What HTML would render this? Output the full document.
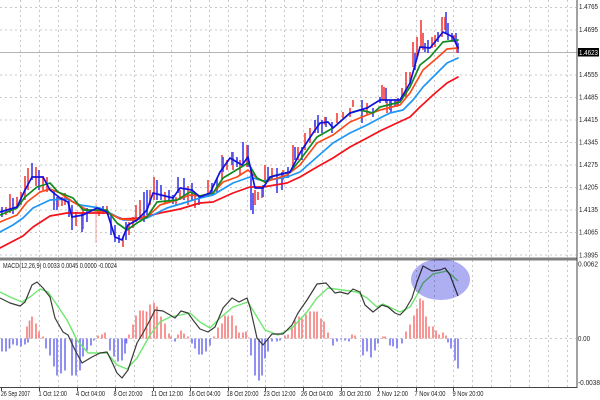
<!DOCTYPE html>
<html><head><meta charset="utf-8"><style>
html,body{margin:0;padding:0;background:#fff;width:600px;height:400px;overflow:hidden}
svg{display:block;filter:blur(.3px)}
text{font-family:"Liberation Sans",sans-serif;fill:#222}
.p{font-size:7.5px}.d{font-size:7px}
</style></head><body>
<svg width="600" height="400" viewBox="0 0 600 400" xmlns="http://www.w3.org/2000/svg">
<rect width="600" height="400" fill="#fff"/>
<g stroke="#c8c8c8" stroke-width="1" stroke-dasharray="2 3" fill="none">
<path d="M20.5 0V387M39.5 0V387M58.5 0V387M77.5 0V387M96.5 0V387M115.5 0V387M134.5 0V387M153.5 0V387M171.5 0V387M190.5 0V387M209.5 0V387M228.5 0V387M247.5 0V387M265.5 0V387M284.5 0V387M303.5 0V387M322.5 0V387M341.5 0V387M360.5 0V387M378.5 0V387M397.5 0V387M416.5 0V387M434.5 0V387M453.5 0V387M472.5 0V387M491.5 0V387M510.5 0V387M529.5 0V387M548.5 0V387M567.5 0V387"/>
<path d="M0 7.5H576M0 30H576M0 75H576M0 97.5H576M0 120H576M0 142.5H576M0 165H576M0 187.5H576M0 210H576M0 232.5H576M0 255H576M0 338.5H576"/>
</g>
<path d="M0 52.5H577" stroke="#b4b4b4" stroke-width="1"/>
<rect x="0" y="257.500" width="577" height="3" fill="#808080"/>
<path d="M577 0V387.5H0" stroke="#444" stroke-width="1" fill="none"/>

<!-- candles -->
<path fill="none" stroke="#f45252" stroke-width="1.8" d="M6 207V215M10 194V213M17 197V208M21 192V205M25 176V200M28 168V190M36 167V186M43 176V190M47 177V192M58 197V207M62 197V206M65 193V205M76 212V226M83 210V229M99 208V216M107 206V214M123 237V247M129 222V235M133 217V228M136 205V222M140 200V218M150 190V205M154 177V200M165 192V204M176 197V206M180 190V200M188 186V205M195 195V208M208 180V197M222 155V180M227 160V170M233 152V170M240 160V175M247 145V167M255 190V205M258 192V200M262 187V198M265 165V183M272 168V180M283 170V180M293 145V168M298 147V160M305 133V150M310 128V143M315 120V133M325 117V125M337 113V123M343 112V118M350 108V117M353 100V107M367 103V115M382 85V100M384 87V100M387 100V113M397 100V107M402 88V100M406 72V97M410 72V83M413 42V67M417 37V57M421 20V47M423 33V50M432 37V48M435 35V47M442 17V37M445 17V30M454 35V42M457 40V53"/>
<path fill="none" stroke="#f9a0a0" stroke-width="1" d="M96 203V243"/>
<path fill="none" stroke="#5252ee" stroke-width="1.8" d="M2 207V217M13 198V214M32 163V180M39 170V190M54 190V210M57 197V210M69 199V217M72 205V230M82 213V232M87 208V222M103 206V214M111 213V235M115 225V242M119 235V243M126 222V240M144 192V222M147 190V215M157 180V200M161 185V200M169 190V202M173 195V204M178 177V193M184 178V200M192 183V200M199 195V205M212 183V195M217 178V192M223 157V172M232 152V165M237 157V167M243 142V163M248 145V167M251 167V210M253 193V214M263 185V197M268 167V182M277 168V193M282 172V190M288 167V178M295 147V160M302 147V160M315 120V127M318 115V133M322 120V133M326 117V127M332 122V133M362 100V123M373 108V117M380 97V103M386 88V103M390 100V110M391 100V112M395 100V107M398 98V105M415 53V70M425 43V52M428 40V53M438 32V42M446 12V33M448 23V40M452 33V42M456 33V43M458 43V53"/>

<!-- moving averages -->
<g fill="none" stroke-width="1.7" stroke-linejoin="round" stroke-linecap="round">
<polyline stroke="#f5101a" points="0,248 23,236 33,227 50,216 67,213 93,213 107,213 123,219 140,218 160,213 180,209 200,203 213,202 233,193 250,187 263,187 287,183 300,177 317,167 333,158 350,147 367,138 380,131 397,123 410,117 420,107 433,95 447,83 458,77"/>
<polyline stroke="#1f96f5" points="0,232 13,225 23,218 33,208 50,200 67,199 80,205 100,208 110,213 123,220 133,220 147,218 167,208 187,202 200,198 213,195 233,183 250,177 263,181 287,177 300,172 317,157 333,143 350,133 367,125 380,118 390,113 403,110 413,100 423,87 437,73 447,63 458,58"/>
<polyline stroke="#fa4a1c" points="0,222 17,215 27,202 40,192 50,189 60,193 73,202 87,210 107,212 120,219 133,220 147,217 160,205 177,200 190,195 200,196 213,193 223,182 237,177 248,170 257,178 265,182 287,175 300,165 317,143 333,135 350,122 367,115 380,110 400,105 410,93 423,70 437,58 447,49 458,48"/>
<polyline stroke="#0f8a1e" points="0,215 17,208 25,197 37,187 50,183 58,192 73,198 83,210 107,210 117,223 127,230 137,223 147,217 157,202 177,200 190,192 200,196 213,193 223,178 233,172 248,163 257,178 265,182 273,176 290,172 300,160 317,137 333,128 350,113 360,110 373,113 380,107 400,102 410,87 420,65 430,57 443,42 458,40"/>
<polyline stroke="#1212dc" points="0,212 17,207 25,190 32,177 43,177 50,190 60,198 68,202 72,217 83,215 97,208 107,212 115,237 122,240 128,225 137,220 147,210 153,193 173,198 180,188 192,190 200,197 210,193 220,172 230,158 242,165 248,157 255,188 263,188 270,177 290,172 300,153 313,133 320,123 328,122 333,128 350,113 367,108 380,100 400,100 410,83 420,47 430,48 443,32 453,37 458,48"/>
</g>

<!-- histogram -->
<path fill="none" stroke="#f67c7c" stroke-width="1.6" d="M27 338.5v-12M29.5 338.5v-18M32 338.5v-22M36 338.5v-15M39 338.5v-7M43 338.5v-2M98 338.5v-3M102 338.5v-4M105 338.5v-6M129 338.5v-4M133 338.5v-14M136 338.5v-23M140 338.5v-28M143 338.5v-28M146.500 338.5v-27M150 338.5v-34M154 338.5v-36M157 338.5v-32M161 338.5v-22M165 338.5v-15M169 338.5v-5M171 338.5v-2M178 338.5v-4M181 338.5v-8M184 338.5v-5M188 338.5v-2M214 338.5v-2M218 338.5v-11M222 338.5v-15M225 338.5v-23M228 338.5v-22M232 338.5v-23M236 338.5v-13M239 338.5v-6M243 338.5v-6M246 338.5v-7M249 338.5v-1M285 338.5v-3M288 338.5v-4M292 338.5v-12M295 338.5v-18M299 338.5v-22M302 338.5v-20M306 338.5v-24M310 338.5v-27M314 338.5v-27M317 338.5v-27M321 338.5v-20M324 338.5v-17M328 338.5v-6M352 338.5v-4M355 338.5v-3M383 338.5v-2M385 338.5v-2M406 338.5v-7M410 338.5v-14M414 338.5v-23M417 338.5v-30M420 338.5v-40M423 338.5v-38M426 338.5v-22M429 338.5v-12M433 338.5v-12M436 338.5v-8M439 338.5v-4M443 338.5v-6M446 338.5v-3"/>
<path fill="none" stroke="#7474ee" stroke-width="1.6" d="M2 338.5v13M6 338.5v13M9.500 338.5v10M13 338.5v6M17 338.5v7M21 338.5v8M25 338.5v6M28 338.5v4M46 338.5v10M50 338.5v17M54 338.500v28M57 338.5v37M61 338.5v35M65 338.5v32M72 338.5v37M76 338.5v37M80 338.5v32M83 338.5v18M87 338.5v12M91 338.5v7M94 338.5v2M110 338.5v12M114 338.5v18M118 338.5v23M122 338.5v22M125 338.5v15M126.500 338.5v5M175 338.5v3M192 338.5v5M195 338.5v10M199 338.5v16M202 338.5v16M206 338.5v13M210 338.5v7M251 338.5v17M255 338.5v37M259 338.5v42M262 338.5v37M265 338.5v20M268 338.5v13M272 338.5v3M277 338.5v3M280 338.5v2M333 338.5v7M337 338.5v3M341 338.5v1M345 338.5v2M349 338.5v3M363 338.5v17M367 338.5v13M371 338.5v19M375 338.5v12M378 338.5v5M390 338.5v7M393 338.5v8M397 338.5v10M402 338.5v5M448 338.5v4M451 338.5v10M455 338.5v22M458 338.5v30"/>

<!-- MACD lines -->
<g fill="none" stroke-linejoin="round">
<polyline stroke="#6fe66f" stroke-width="1.4" points="0,292 10,297 22,302 30,297 40,289 48,292 57,305 67,320 77,340 88,353 107,353 117,365 127,369 137,358 150,335 160,322 170,317 190,313 200,322 210,328 220,318 233,307 248,302 257,317 265,330 278,335 292,328 307,312 317,298 328,288 357,292 367,298 377,307 383,304 400,312 410,307 417,295 423,283 433,274 447,271 458,281"/>
<polyline stroke="#3a3a3a" stroke-width="1.2" points="0,298 10,303 20,306 25,302 32,285 37,282 43,288 50,297 55,318 63,332 68,335 75,350 82,363 92,357 100,353 107,352 112,362 117,373 122,378 128,370 137,343 143,333 150,320 155,310 163,311 170,315 175,318 181,311 188,313 193,320 200,329 208,332 215,327 223,308 232,298 239,302 247,298 250,307 257,338 263,345 272,334 283,334 292,325 298,313 307,300 317,284 326,283 335,293 340,292 348,294 353,289 360,292 365,305 373,312 382,305 388,307 395,313 400,315 405,310 412,298 417,282 423,266 432,271 440,270 445,268 450,275 458,296"/>
</g>
<ellipse cx="440.500" cy="279.500" rx="29.500" ry="20.500" fill="#aeaef2" style="mix-blend-mode:multiply"/>

<!-- price labels -->
<g>
<text class="p" x="579" y="9" textLength="19" lengthAdjust="spacingAndGlyphs">1.4765</text>
<text class="p" x="579" y="32" textLength="19" lengthAdjust="spacingAndGlyphs">1.4695</text>
<text class="p" x="579" y="77" textLength="19" lengthAdjust="spacingAndGlyphs">1.4555</text>
<text class="p" x="579" y="99.500" textLength="19" lengthAdjust="spacingAndGlyphs">1.4485</text>
<text class="p" x="579" y="122" textLength="19" lengthAdjust="spacingAndGlyphs">1.4415</text>
<text class="p" x="579" y="144.500" textLength="19" lengthAdjust="spacingAndGlyphs">1.4345</text>
<text class="p" x="579" y="167" textLength="19" lengthAdjust="spacingAndGlyphs">1.4275</text>
<text class="p" x="579" y="189.500" textLength="19" lengthAdjust="spacingAndGlyphs">1.4205</text>
<text class="p" x="579" y="212" textLength="19" lengthAdjust="spacingAndGlyphs">1.4135</text>
<text class="p" x="579" y="234.500" textLength="19" lengthAdjust="spacingAndGlyphs">1.4065</text>
<text class="p" x="579" y="257.500" textLength="19" lengthAdjust="spacingAndGlyphs">1.3995</text>
<text class="p" x="578" y="266.500" textLength="20" lengthAdjust="spacingAndGlyphs">0.0062</text>
<text class="p" x="578" y="341" textLength="12" lengthAdjust="spacingAndGlyphs">0.00</text>
<text class="p" x="578" y="385" textLength="22" lengthAdjust="spacingAndGlyphs">-0.0038</text>
</g>
<rect x="578" y="48" width="21" height="8.500" fill="#000"/>
<text class="p" x="579" y="55" textLength="19" lengthAdjust="spacingAndGlyphs" style="fill:#fff">1.4623</text>

<text class="d" x="3" y="268" textLength="114" lengthAdjust="spacingAndGlyphs">MACD(12,26,9) 0.0033 0.0045 0.0000 -0.0024</text>

<!-- date labels -->
<path d="M1.500 387V391M39.500 387V391M77.500 387V391M115.500 387V391M153.500 387V391M190.500 387V391M228.500 387V391M265.500 387V391M303.500 387V391M341.500 387V391M378.500 387V391M416.500 387V391M453.500 387V391" stroke="#444" stroke-width="1"/>
<text class="d" x="1" y="396" textLength="29" lengthAdjust="spacingAndGlyphs">26 Sep 2007</text>
<text class="d" x="38.500" y="396" textLength="28.500" lengthAdjust="spacingAndGlyphs">1 Oct 12:00</text>
<text class="d" x="76" y="396" textLength="29" lengthAdjust="spacingAndGlyphs">4 Oct 04:00</text>
<text class="d" x="113.500" y="396" textLength="29" lengthAdjust="spacingAndGlyphs">8 Oct 20:00</text>
<text class="d" x="151" y="396" textLength="32" lengthAdjust="spacingAndGlyphs">11 Oct 12:00</text>
<text class="d" x="188.500" y="396" textLength="32" lengthAdjust="spacingAndGlyphs">16 Oct 04:00</text>
<text class="d" x="226.500" y="396" textLength="32" lengthAdjust="spacingAndGlyphs">18 Oct 20:00</text>
<text class="d" x="263.500" y="396" textLength="32" lengthAdjust="spacingAndGlyphs">23 Oct 12:00</text>
<text class="d" x="301" y="396" textLength="32" lengthAdjust="spacingAndGlyphs">26 Oct 04:00</text>
<text class="d" x="339" y="396" textLength="32" lengthAdjust="spacingAndGlyphs">30 Oct 20:00</text>
<text class="d" x="377" y="396" textLength="31" lengthAdjust="spacingAndGlyphs">2 Nov 12:00</text>
<text class="d" x="414.500" y="396" textLength="31" lengthAdjust="spacingAndGlyphs">7 Nov 04:00</text>
<text class="d" x="452.500" y="396" textLength="31" lengthAdjust="spacingAndGlyphs">9 Nov 20:00</text>
</svg>
</body></html>
